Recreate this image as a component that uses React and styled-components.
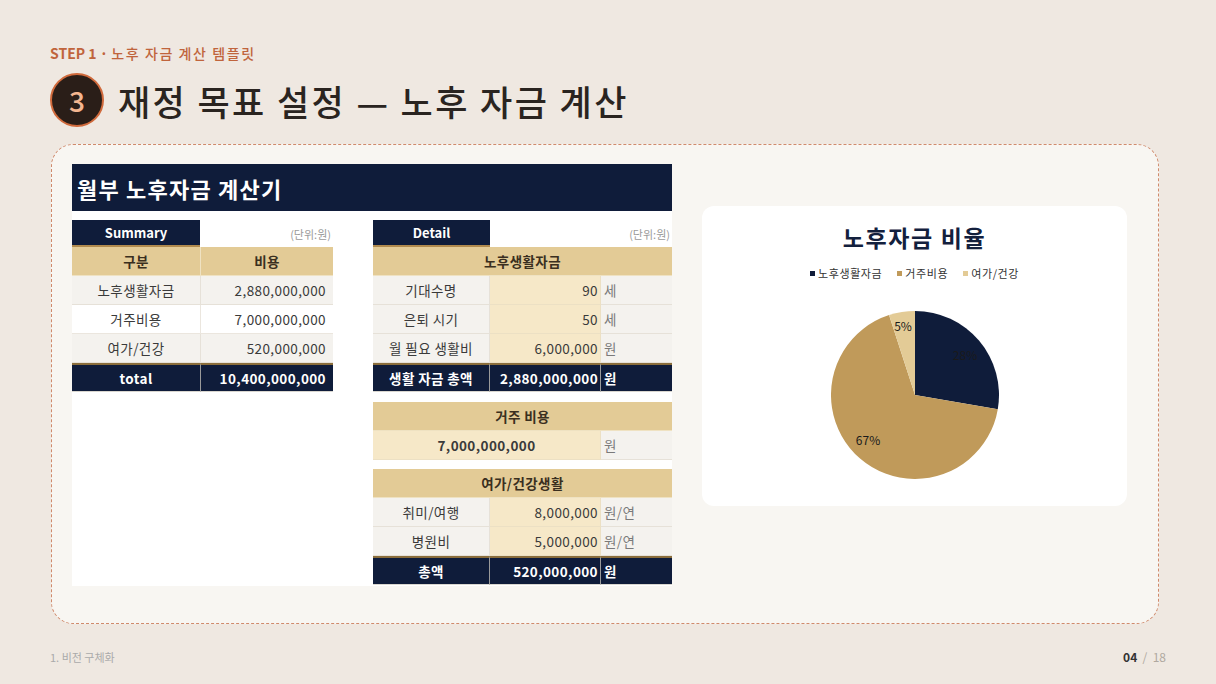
import React from "react";
import styled, { createGlobalStyle } from "styled-components";

const NAVY = "#0f1c3a";
const TAN = "#e3cb96";
const CREAM = "#f6e8c8";
const LIGHT = "#f4f2ee";
const GOLD = "#c09a5a";

const GlobalStyle = createGlobalStyle`
  html, body { margin: 0; padding: 0; background: #efe8e1; }
  body { font-family: "Noto Sans CJK KR", "Noto Sans", sans-serif; }
  * { box-sizing: border-box; }
`;

const Page = styled.div`
  width: 1216px;
  height: 684px;
  padding: 43px 50px 0 50px;
  overflow: hidden;
`;

const Step = styled.div`
  font-size: 14px;
  font-weight: 700;
  color: #c0643c;
  line-height: 20px;
  span {
    font-weight: 500;
    letter-spacing: 1.6px;
  }
`;

const TitleRow = styled.div`
  display: flex;
  align-items: center;
  gap: 14px;
  margin-top: 10px;
  height: 54px;
`;

const Badge = styled.div`
  width: 54px;
  height: 54px;
  border-radius: 50%;
  background: #2a1e18;
  border: 2px solid #d06a3c;
  display: flex;
  align-items: center;
  justify-content: center;
  color: #f3b690;
  font-size: 28px;
  font-weight: 500;
`;

const Title = styled.h1`
  margin: 0;
  font-size: 35px;
  font-weight: 500;
  color: #2a2420;
  letter-spacing: 2.4px;
`;

const Card = styled.div`
  margin-top: 17px;
  margin-left: 1px;
  width: 1108px;
  height: 480px;
  border: 1px dashed #d08a6c;
  border-radius: 22px;
  background: #f8f6f2;
  padding: 19px 31px 0 20px;
  display: flex;
  gap: 30px;
  align-items: flex-start;
`;

const Sheet = styled.div`
  width: 600px;
  height: 422px;
  background: #fff;
  display: flex;
  flex-direction: column;
`;

const SheetHeader = styled.div`
  height: 47px;
  background: ${NAVY};
  color: #fff;
  font-size: 22px;
  font-weight: 700;
  letter-spacing: 1.2px;
  padding-left: 5px;
  display: flex;
  align-items: center;
`;

const SheetBody = styled.div`
  display: flex;
  gap: 40px;
  padding-top: 9px;
`;

const Block = styled.div`
  width: ${(p) => p.$w}px;
  display: flex;
  flex-direction: column;
`;

const Group = styled.div`
  display: flex;
  flex-direction: column;
  margin-top: ${(p) => p.$mt || 0}px;
`;

const TabRow = styled.div`
  display: flex;
  justify-content: space-between;
  align-items: center;
  height: 27px;
`;

const Tab = styled.div`
  width: ${(p) => p.$w}px;
  height: 27px;
  background: ${NAVY};
  border-bottom: 2px solid #b08a4e;
  color: #fff;
  font-size: 13px;
  font-weight: 700;
  display: flex;
  align-items: center;
  justify-content: center;
`;

const UnitNote = styled.span`
  font-size: 11px;
  color: #9a9a9a;
  padding-right: 2px;
`;

const Row = styled.div`
  display: grid;
  grid-template-columns: ${(p) => p.$cols};
  height: 29px;
`;

const tones = {
  tan: { bg: TAN, color: "#3a2f20", line: "#efe2c2" },
  light: { bg: LIGHT, color: "#3a3a3a", line: "#e6e1d8" },
  white: { bg: "#ffffff", color: "#3a3a3a", line: "#ebe6de" },
  cream: { bg: CREAM, color: "#3a3a3a", line: "#ece0c4" },
  navy: { bg: NAVY, color: "#ffffff", line: "#9a9a9a" },
};

const Cell = styled.div`
  grid-column: ${(p) => (p.$span ? "1 / -1" : "auto")};
  background: ${(p) => tones[p.$tone].bg};
  color: ${(p) => (p.$muted ? "#7a7a7a" : tones[p.$tone].color)};
  font-size: 13.5px;
  letter-spacing: 0.4px;
  font-weight: ${(p) => (p.$bold ? 700 : 400)};
  display: flex;
  align-items: center;
  justify-content: ${(p) =>
    p.$align === "right" ? "flex-end" : p.$align === "left" ? "flex-start" : "center"};
  padding: ${(p) => (p.$align === "right" ? `0 ${p.$pr ?? 7}px 0 0` : p.$align === "left" ? "0 0 0 3px" : "0")};
  border-right: 1px solid ${(p) => tones[p.$tone].line};
  border-bottom: 1px solid ${(p) => (p.$tone === "navy" ? "#d9d6cf" : tones[p.$tone].line)};
  border-top: ${(p) => (p.$tone === "navy" ? "2px solid #8a6d3b" : "0")};
  white-space: nowrap;
  &:last-child {
    border-right: 0;
  }
`;

const ChartBox = styled.div`
  margin-top: 42px;
  width: 425px;
  height: 300px;
  background: #fff;
  border-radius: 12px;
  display: flex;
  flex-direction: column;
  align-items: center;
  padding-top: 17px;
`;

const ChartTitle = styled.div`
  font-size: 23px;
  font-weight: 700;
  line-height: 28px;
  letter-spacing: 1.6px;
  color: #13203d;
`;

const Legend = styled.div`
  margin-top: 15px;
  display: flex;
  gap: 15px;
  font-size: 11px;
  letter-spacing: 0.6px;
  line-height: 14px;
  color: #333;
`;

const LegendItem = styled.span`
  display: flex;
  align-items: center;
  gap: 3px;
`;

const Swatch = styled.span`
  width: 5px;
  height: 5px;
  background: ${(p) => p.$c};
`;

const PieWrap = styled.svg`
  margin-top: 31px;
  display: block;
`;

const Footer = styled.div`
  margin-top: 25px;
  display: flex;
  justify-content: space-between;
  align-items: center;
  font-size: 11px;
  color: #aaa;
  line-height: 16px;
`;

const PageNum = styled.span`
  font-size: 12px;
  color: #b0a8a0;
  b {
    color: #333;
    font-weight: 700;
  }
`;

const SUM_COLS = "129px 132px";
const DET_COLS = "117px 111px 71px";

function Pie() {
  const cx = 84, cy = 84, r = 84;
  const pt = (frac) => {
    const a = frac * 2 * Math.PI;
    return [cx + r * Math.sin(a), cy - r * Math.cos(a)];
  };
  const f1 = 2.88 / 10.4;
  const f2 = f1 + 7 / 10.4;
  const p0 = pt(0), p1 = pt(f1), p2 = pt(f2);
  const arc = (a, b, large) =>
    `M${cx},${cy} L${a[0]},${a[1]} A${r},${r} 0 ${large} 1 ${b[0]},${b[1]} Z`;
  return (
    <PieWrap width="168" height="168" viewBox="0 0 168 168">
      <path d={arc(p0, p1, 0)} fill={NAVY} />
      <path d={arc(p1, p2, 1)} fill={GOLD} />
      <path d={arc(p2, p0, 0)} fill={TAN} />
      <g fontSize="12" fill="#1a1a1a" fontFamily="'Noto Sans CJK KR', sans-serif" textAnchor="middle">
        <text x={cx + 50} y={cy - 35}>28%</text>
        <text x={cx - 47} y={cy + 50}>67%</text>
        <text x={cx - 12} y={cy - 64}>5%</text>
      </g>
    </PieWrap>
  );
}

export default function App() {
  return (
    <>
      <GlobalStyle />
      <Page>
        <Step>
          STEP 1 · <span>노후 자금 계산 템플릿</span>
        </Step>
        <TitleRow>
          <Badge>3</Badge>
          <Title>재정 목표 설정 — 노후 자금 계산</Title>
        </TitleRow>
        <Card>
          <Sheet>
            <SheetHeader>월부 노후자금 계산기</SheetHeader>
            <SheetBody>
              <Block $w={261}>
                <TabRow>
                  <Tab $w={128}>Summary</Tab>
                  <UnitNote>(단위:원)</UnitNote>
                </TabRow>
                <Row $cols={SUM_COLS}>
                  <Cell $tone="tan" $bold>구분</Cell>
                  <Cell $tone="tan" $bold>비용</Cell>
                </Row>
                <Row $cols={SUM_COLS}>
                  <Cell $tone="light">노후생활자금</Cell>
                  <Cell $tone="light" $align="right">2,880,000,000</Cell>
                </Row>
                <Row $cols={SUM_COLS}>
                  <Cell $tone="white">거주비용</Cell>
                  <Cell $tone="white" $align="right">7,000,000,000</Cell>
                </Row>
                <Row $cols={SUM_COLS}>
                  <Cell $tone="light">여가/건강</Cell>
                  <Cell $tone="light" $align="right">520,000,000</Cell>
                </Row>
                <Row $cols={SUM_COLS}>
                  <Cell $tone="navy" $bold>total</Cell>
                  <Cell $tone="navy" $bold $align="right">10,400,000,000</Cell>
                </Row>
              </Block>

              <Block $w={299}>
                <Group>
                  <TabRow>
                    <Tab $w={117}>Detail</Tab>
                    <UnitNote>(단위:원)</UnitNote>
                  </TabRow>
                  <Row $cols={DET_COLS}>
                    <Cell $tone="tan" $bold $span>노후생활자금</Cell>
                  </Row>
                  <Row $cols={DET_COLS}>
                    <Cell $tone="light">기대수명</Cell>
                    <Cell $tone="cream" $align="right" $pr={2}>90</Cell>
                    <Cell $tone="light" $align="left" $muted>세</Cell>
                  </Row>
                  <Row $cols={DET_COLS}>
                    <Cell $tone="light">은퇴 시기</Cell>
                    <Cell $tone="cream" $align="right" $pr={2}>50</Cell>
                    <Cell $tone="light" $align="left" $muted>세</Cell>
                  </Row>
                  <Row $cols={DET_COLS}>
                    <Cell $tone="light">월 필요 생활비</Cell>
                    <Cell $tone="cream" $align="right" $pr={2}>6,000,000</Cell>
                    <Cell $tone="light" $align="left" $muted>원</Cell>
                  </Row>
                  <Row $cols={DET_COLS}>
                    <Cell $tone="navy" $bold>생활 자금 총액</Cell>
                    <Cell $tone="navy" $bold $align="right" $pr={2}>2,880,000,000</Cell>
                    <Cell $tone="navy" $bold $align="left">원</Cell>
                  </Row>
                </Group>

                <Group $mt={10}>
                  <Row $cols={DET_COLS}>
                    <Cell $tone="tan" $bold $span>거주 비용</Cell>
                  </Row>
                  <Row $cols="228px 71px">
                    <Cell $tone="cream" $bold>7,000,000,000</Cell>
                    <Cell $tone="light" $align="left" $muted>원</Cell>
                  </Row>
                </Group>

                <Group $mt={9}>
                  <Row $cols={DET_COLS}>
                    <Cell $tone="tan" $bold $span>여가/건강생활</Cell>
                  </Row>
                  <Row $cols={DET_COLS}>
                    <Cell $tone="light">취미/여행</Cell>
                    <Cell $tone="cream" $align="right" $pr={2}>8,000,000</Cell>
                    <Cell $tone="light" $align="left" $muted>원/연</Cell>
                  </Row>
                  <Row $cols={DET_COLS}>
                    <Cell $tone="light">병원비</Cell>
                    <Cell $tone="cream" $align="right" $pr={2}>5,000,000</Cell>
                    <Cell $tone="light" $align="left" $muted>원/연</Cell>
                  </Row>
                  <Row $cols={DET_COLS}>
                    <Cell $tone="navy" $bold>총액</Cell>
                    <Cell $tone="navy" $bold $align="right" $pr={2}>520,000,000</Cell>
                    <Cell $tone="navy" $bold $align="left">원</Cell>
                  </Row>
                </Group>
              </Block>
            </SheetBody>
          </Sheet>

          <ChartBox>
            <ChartTitle>노후자금 비율</ChartTitle>
            <Legend>
              <LegendItem><Swatch $c={NAVY} />노후생활자금</LegendItem>
              <LegendItem><Swatch $c={GOLD} />거주비용</LegendItem>
              <LegendItem><Swatch $c={TAN} />여가/건강</LegendItem>
            </Legend>
            <Pie />
          </ChartBox>
        </Card>
        <Footer>
          <span>1. 비전 구체화</span>
          <PageNum>
            <b>04</b>&nbsp;&nbsp;/&nbsp;&nbsp;18
          </PageNum>
        </Footer>
      </Page>
    </>
  );
}
